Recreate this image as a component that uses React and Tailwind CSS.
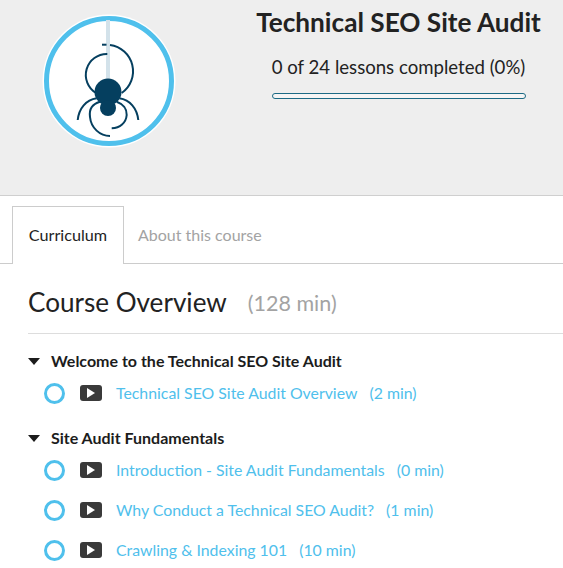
const FONT = "font-['Lato',sans-serif]";

function Logo() {
  return (
    <svg width="134" height="134" viewBox="0 0 134 134" fill="none" className="shrink-0">
      <circle cx="67" cy="67" r="66.5" fill="#fff" />
      <circle cx="67" cy="67" r="62.5" stroke="#4fc0ec" strokeWidth="5" fill="#fff" />
      <rect x="64" y="6" width="4" height="70" fill="#d3e2ea" />
      <g stroke="#053f5f" strokeWidth="2" strokeLinecap="butt" fill="none">
        <path d="M60 30.7 H64.5" />
        <path d="M68 31 A26.5 26.5 0 0 1 79.7 79" />
        <path d="M65.3 40 A21 21 0 0 0 54 79" />
        <path d="M54.7 84.3 C44 86 37 94 35.7 106" />
        <path d="M77.3 84.3 C88 86 95 94 96.3 106" />
        <path d="M58 87.7 C50 90 47 96 48 103 C49 114 58 122 68 122" />
        <path d="M74.7 87.7 C81 90 85 95 84.7 101 C84 109 78 114 69.7 114.3" />
      </g>
      <circle cx="66" cy="78" r="13.5" fill="#053f5f" />
      <circle cx="66" cy="94" r="8" fill="#053f5f" />
    </svg>
  );
}

function Caret() {
  return (
    <svg width="12" height="7" viewBox="0 0 12 7" className="shrink-0">
      <path d="M0 0 H12 L6 7 Z" fill="#1c1c1c" />
    </svg>
  );
}

function Lesson({ title, mins }) {
  return (
    <div className="flex items-center h-10">
      <span className="ml-[16px] w-[21px] h-[21px] rounded-full border-[3px] border-[#4fc0ec] shrink-0" />
      <span className="ml-[15px] w-[22px] h-[16px] rounded-[3px] bg-[#3a3a3a] flex items-center justify-center shrink-0">
        <svg width="8" height="10" viewBox="0 0 8 10"><path d="M0 0 L8 5 L0 10 Z" fill="#fff" /></svg>
      </span>
      <span className="ml-[14px] text-[15.85px] text-[#4fc0ec] whitespace-nowrap">{title}</span>
      <span className="ml-[12px] text-[15.85px] text-[#4fc0ec] whitespace-nowrap">({mins} min)</span>
    </div>
  );
}

function Section({ title, children }) {
  return (
    <div>
      <div className="flex items-center h-[20px]">
        <Caret />
        <span className="ml-[11px] text-[16px] font-bold text-[#1c1c1c] whitespace-nowrap">{title}</span>
      </div>
      <div className="mt-[2px]">{children}</div>
    </div>
  );
}

export default function App() {
  return (
    <div className={`${FONT} w-[563px] h-[568px] overflow-hidden bg-white`}>
      <header className="h-[196px] bg-[#eeeeee] border-b border-[#cfcfcf] flex items-start">
        <div className="ml-[42px] mt-[14px]">
          <Logo />
        </div>
        <div className="ml-[58px] w-[329px] flex flex-col items-center">
          <h1 className="mt-[5px] text-[26.2px] leading-[34px] font-bold text-[#222222] whitespace-nowrap">Technical SEO Site Audit</h1>
          <p className="mt-[14px] text-[18.6px] leading-[28px] text-[#222222] whitespace-nowrap">0 of 24 lessons completed (0%)</p>
          <div className="mt-[12px] w-[254px] h-[6px] rounded-full border border-[#1c6a85] bg-[#f5f5f5]" />
        </div>
      </header>

      <nav className="mt-[10px] h-[58px] border-b border-[#cccccc] flex pl-[12px]">
        <div className="h-[58px] w-[112px] border border-b-0 border-[#cccccc] bg-white flex items-center justify-center text-[16.2px] text-[#222222]">
          Curriculum
        </div>
        <div className="ml-[14px] h-[58px] flex items-center text-[16px] text-[#a3a3a3]">About this course</div>
      </nav>

      <main className="pl-[28px]">
        <div className="h-[70px] border-b border-[#dddddd] flex items-center whitespace-nowrap pt-[8px]">
          <h2 className="text-[26.1px] text-[#222222]">Course Overview</h2>
          <span className="ml-[21px] text-[21.5px] text-[#a3a3a3] mt-[2px]">(128 min)</span>
        </div>
        <div className="mt-[17px]">
          <Section title="Welcome to the Technical SEO Site Audit">
            <Lesson title="Technical SEO Site Audit Overview" mins={2} />
          </Section>
        </div>
        <div className="mt-[15px]">
          <Section title="Site Audit Fundamentals">
            <Lesson title="Introduction - Site Audit Fundamentals" mins={0} />
            <Lesson title="Why Conduct a Technical SEO Audit?" mins={1} />
            <Lesson title="Crawling & Indexing 101" mins={10} />
          </Section>
        </div>
      </main>
    </div>
  );
}
